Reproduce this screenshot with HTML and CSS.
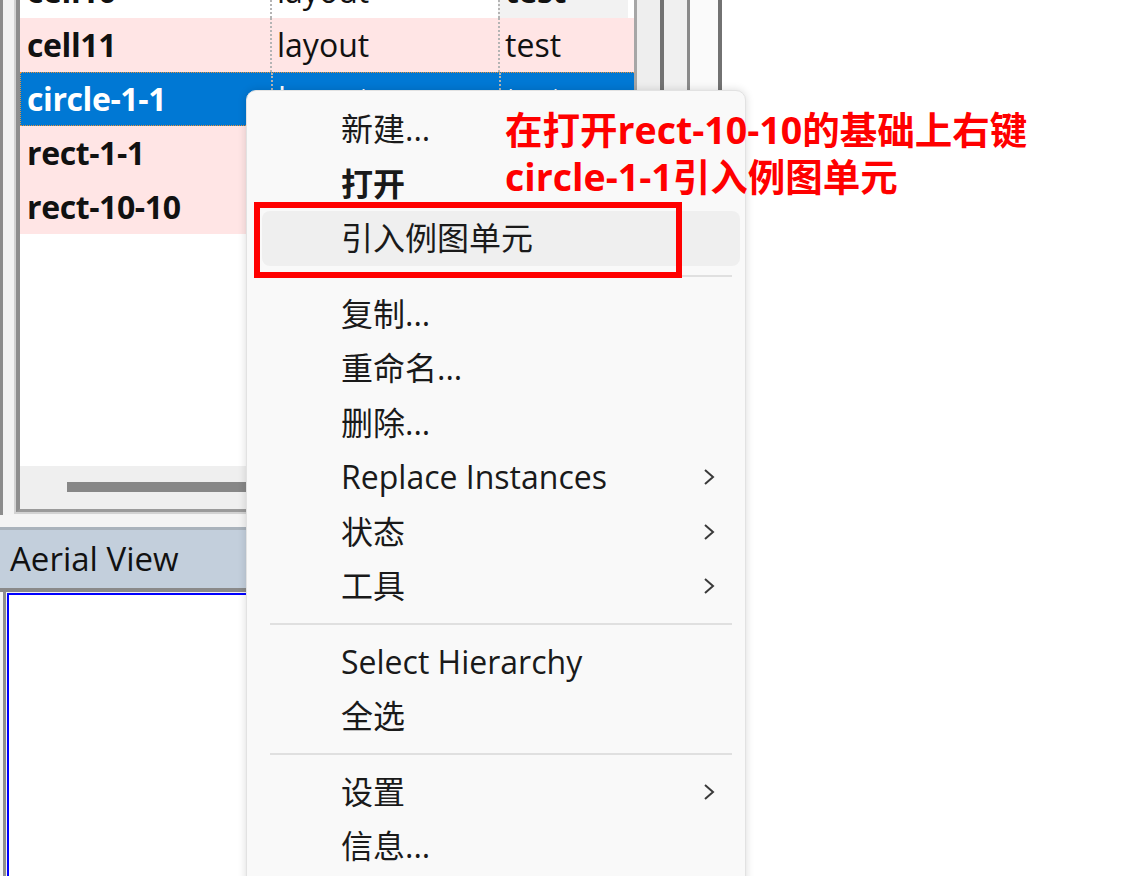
FILE: index.html
```html
<!DOCTYPE html>
<html lang="zh-CN">
<head>
<meta charset="utf-8">
<title>Cell list context menu</title>
<link rel="stylesheet" href="styles.css">
</head>
<body>
<div class="app">
  <div class="list-panel">
    <div class="list-frame">
      <div class="list-box">
        <div class="table">
          <div class="row row-top">
            <div class="cell c1 bold">cell10</div>
            <div class="cell c2">layout</div>
            <div class="cell c3 bold shade">test</div>
          </div>
          <div class="row pink">
            <div class="cell c1 bold">cell11</div>
            <div class="cell c2">layout</div>
            <div class="cell c3">test</div>
          </div>
          <div class="row sel">
            <div class="cell c1 bold">circle-1-1</div>
            <div class="cell c2">layout</div>
            <div class="cell c3">test</div>
          </div>
          <div class="row pink">
            <div class="cell c1 bold">rect-1-1</div>
            <div class="cell c2">layout</div>
            <div class="cell c3">test</div>
          </div>
          <div class="row pink">
            <div class="cell c1 bold">rect-10-10</div>
            <div class="cell c2">layout</div>
            <div class="cell c3">test</div>
          </div>
        </div>
        <div class="list-fill"></div>
        <div class="hscroll"><div class="thumb"></div></div>
      </div>
    </div>
    <div class="vlines">
      <div class="vl vl-a"></div>
      <div class="vs vs-a"></div>
      <div class="vl vl-b"></div>
      <div class="vs vs-b"></div>
      <div class="vl vl-c"></div>
      <div class="vs vs-c"></div>
      <div class="vl vl-d"></div>
    </div>
  </div>
  <div class="aerial">
    <div class="aerial-head">Aerial View</div>
    <div class="aerial-body"><div class="canvas"></div></div>
  </div>
</div>

<div class="menu">
  <div class="mi">新建...</div>
  <div class="mi strong">打开</div>
  <div class="mi hover">引入例图单元</div>
  <div class="sep"></div>
  <div class="mi">复制...</div>
  <div class="mi">重命名...</div>
  <div class="mi">删除...</div>
  <div class="mi sub">Replace Instances<svg class="chev" width="12" height="20" viewBox="0 0 12 20"><polyline points="2,3 10,10 2,17"/></svg></div>
  <div class="mi sub">状态<svg class="chev" width="12" height="20" viewBox="0 0 12 20"><polyline points="2,3 10,10 2,17"/></svg></div>
  <div class="mi sub">工具<svg class="chev" width="12" height="20" viewBox="0 0 12 20"><polyline points="2,3 10,10 2,17"/></svg></div>
  <div class="sep"></div>
  <div class="mi">Select Hierarchy</div>
  <div class="mi">全选</div>
  <div class="sep"></div>
  <div class="mi sub">设置<svg class="chev" width="12" height="20" viewBox="0 0 12 20"><polyline points="2,3 10,10 2,17"/></svg></div>
  <div class="mi">信息...</div>
</div>

<div class="mark-box"></div>
<div class="note">在打开rect-10-10的基础上右键<br>circle-1-1引入例图单元</div>
</body>
</html>
```
FILE: styles.css
```css
html, body {
  margin: 0;
  padding: 0;
}
body {
  width: 1144px;
  height: 876px;
  overflow: hidden;
  position: relative;
  background: #ffffff;
  font-family: "Open Sans", "Noto Sans CJK SC", sans-serif;
  color: #111111;
}

.app {
  width: 722px;
  display: flex;
  flex-direction: column;
}

/* ---------- cell list panel ---------- */
.list-panel {
  height: 515px;
  display: flex;
  border-left: 3px solid #8c8c8c;
  background: #f3f3f3;
}
.list-frame {
  margin-left: 11px;
  width: 618px;
  display: flex;
  border-left: 2px solid #d2d2d2;
  border-bottom: 2px solid #d2d2d2;
  margin-bottom: 1px;
}
.list-box {
  flex: 1;
  display: flex;
  flex-direction: column;
  border-left: 4px solid #8e8e8e;
  border-bottom: 3px solid #9a9a9a;
  background: #ffffff;
  overflow: hidden;
}
.table {
  margin-top: -36px;
  display: flex;
  flex-direction: column;
}
.row {
  display: grid;
  grid-template-columns: 250px 228px 130px;
  height: 54px;
  font-size: 32px;
  line-height: 54px;
}
.cell {
  padding-left: 7px;
  white-space: nowrap;
  overflow: hidden;
}
.c2, .c3 {
  border-left: 2px dotted #b4b4b4;
  padding-left: 5px;
}
.bold { font-weight: 700; letter-spacing: -0.4px; }
.shade { background: #f2f2f2; }
.pink { background: #ffe5e5; }
.sel {
  background: #0078d4;
  color: #ffffff;
  box-sizing: border-box;
  border: 1px dotted #e8923a;
  border-right: none;
  line-height: 52px;
}
.sel .c1 { padding-left: 6px; }
.list-fill { flex: 1; }
.hscroll {
  height: 43px;
  background: #efefef;
  padding-top: 16px;
  padding-left: 47px;
  box-sizing: border-box;
}
.thumb {
  width: 420px;
  height: 10px;
  background: #878787;
}

/* right side splitters */
.vlines {
  display: flex;
  height: 100%;
}
.vl { width: 3px; }
.vl-a { background: #a6a6a6; }
.vl-b { width: 4px; background: #727272; }
.vl-c { background: #8a8a8a; }
.vl-d { width: 4px; background: #727272; }
.vs-a { width: 23px; background: #eeeeee; }
.vs-b { width: 23px; background: #f0f0f0; }
.vs-c { width: 28px; background: #fafafa; }

/* ---------- aerial view ---------- */
.aerial {
  padding-top: 12px;
  background: #f4f4f4;
  height: 349px;
  display: flex;
  flex-direction: column;
}
.aerial-head {
  border-top: 3px solid #aab3bc;
  border-bottom: 4px solid #8a8a8a;
  background: #c3cfdc;
  height: 58px;
  line-height: 58px;
  font-size: 33px;
  padding-left: 10px;
  color: #111111;
}
.aerial-body {
  flex: 1;
  margin-left: 3px;
  border-left: 3px solid #8f8f8f;
  padding: 1px 0 0 1px;
  display: flex;
}
.canvas {
  flex: 1;
  border-top: 2px solid #0000ff;
  border-left: 2px solid #0000ff;
  background: #ffffff;
}

/* ---------- context menu ---------- */
.menu {
  position: absolute;
  left: 246px;
  top: 90px;
  width: 500px;
  height: 820px;
  box-sizing: border-box;
  padding-top: 11px;
  background: #f9f9f9;
  border: 1px solid #e2e2e2;
  border-radius: 10px;
  box-shadow: 0 0 9px rgba(0, 0, 0, 0.15);
  font-size: 32px;
  color: #1a1a1a;
}
.mi {
  height: 54.5px;
  line-height: 54px;
  margin: 0 5px 0 15px;
  padding-left: 79px;
  padding-right: 25px;
  display: flex;
  align-items: center;
  justify-content: space-between;
  border-radius: 8px;
  white-space: nowrap;
}
.mi.strong { font-weight: 700; }
.mi.hover { background: #efefef; }
.chev {
  fill: none;
  stroke: #3a3a3a;
  stroke-width: 2;
}
.sep {
  height: 21px;
  display: flex;
  align-items: center;
  margin: 0 13px 0 23px;
}
.sep::before {
  content: "";
  flex: 1;
  height: 2px;
  background: #e0e0e0;
}

/* ---------- annotation ---------- */
.mark-box {
  position: absolute;
  left: 254px;
  top: 202px;
  width: 428px;
  height: 76px;
  box-sizing: border-box;
  border: 6px solid #ff0000;
}
.note {
  position: absolute;
  left: 505px;
  top: 106px;
  font-size: 37.5px;
  line-height: 47px;
  font-weight: 700;
  color: #ff0000;
  white-space: nowrap;
}
```
